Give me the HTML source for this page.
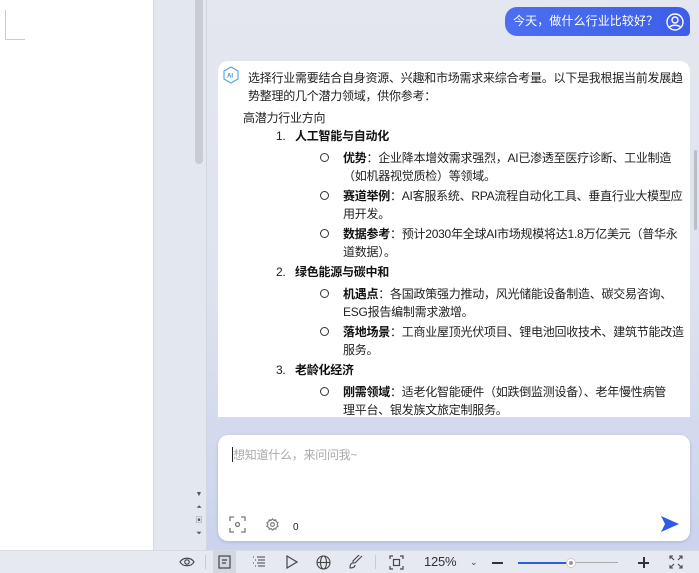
<!DOCTYPE html>
<html><head><meta charset="utf-8"><style>
*{margin:0;padding:0;box-sizing:border-box}
body{width:699px;height:573px;overflow:hidden;position:relative;font-family:"Liberation Sans","Noto Sans CJK SC",sans-serif;font-size:12px;color:#222;background:#fff}
.a{position:absolute;white-space:nowrap;line-height:18px;letter-spacing:-0.25px}
b{font-weight:bold;color:#111}
.c{position:absolute;width:9px;height:9px;border:1.3px solid #333;border-radius:50%}
</style></head><body>
<div style="position:absolute;left:0;top:0;width:153px;height:550px;background:#fff"></div>
<div style="position:absolute;left:5px;top:10px;width:1px;height:29px;background:#ccc"></div>
<div style="position:absolute;left:5px;top:39px;width:20px;height:1px;background:#ccc"></div>
<div style="position:absolute;left:153px;top:0;width:54px;height:550px;background:#e3e7ee;border-left:1px solid #d5d9e0;border-right:1px solid #d3d6dc"></div>
<div style="position:absolute;left:195px;top:0;width:8px;height:164px;background:#c9ccd0;border-radius:0 0 4px 4px"></div>
<div style="position:absolute;left:207px;top:0;width:492px;height:550px;background:linear-gradient(#e4e7ef 0%,#dfe3ef 50%,#cbd3ed 100%)"></div>
<div style="position:absolute;left:694px;top:150px;width:3px;height:80px;background:#b9bdc5;border-radius:2px"></div>
<div style="position:absolute;left:505px;top:7px;width:185px;height:29px;background:linear-gradient(90deg,#4c6ef0,#3d5fe8);border-radius:12px 12px 4px 12px"></div>
<div class="a" style="left:513px;top:12px;color:#fff;font-size:12px;letter-spacing:0.1px">今天，做什么行业比较好？</div>
<svg style="position:absolute;left:666px;top:13px" width="18" height="18" viewBox="0 0 18 18" fill="none" stroke="#fff" stroke-width="1.4"><circle cx="9" cy="9" r="8"/><circle cx="9" cy="7" r="3"/><path d="M3.5 14.5c1.5-3 9.5-3 11 0"/></svg>
<div style="position:absolute;left:218px;top:61px;width:472px;height:356px;background:#fff;border-radius:10px 10px 0 0"></div>
<svg style="position:absolute;left:223px;top:66px" width="16" height="18" viewBox="0 0 16 18" fill="none" stroke="#4aa3e8" stroke-width="1.1"><path d="M8 1L15 5v8L8 17 1 13V5z"/><text x="4" y="11.5" font-size="6" fill="#3a8fdc" stroke="none" font-family="Liberation Sans" font-weight="bold">AI</text></svg>
<div class="a" style="left:248px;top:69px">选择行业需要结合自身资源、兴趣和市场需求来综合考量。以下是我根据当前发展趋</div>
<div class="a" style="left:248px;top:87px">势整理的几个潜力领域，供你参考：</div>
<div class="a" style="left:243px;top:109px">高潜力行业方向</div>
<div class="a" style="left:276px;top:127px">1.</div><div class="a" style="left:295px;top:127px"><b>人工智能与自动化</b></div>
<div class="c" style="left:320px;top:153px"></div>
<div class="a" style="left:343px;top:149px"><b>优势</b>：企业降本增效需求强烈，AI已渗透至医疗诊断、工业制造</div>
<div class="a" style="left:343px;top:167px">（如机器视觉质检）等领域。</div>
<div class="c" style="left:320px;top:191px"></div>
<div class="a" style="left:343px;top:187px"><b>赛道举例</b>：AI客服系统、RPA流程自动化工具、垂直行业大模型应</div>
<div class="a" style="left:343px;top:205px">用开发。</div>
<div class="c" style="left:320px;top:229px"></div>
<div class="a" style="left:343px;top:225px"><b>数据参考</b>：预计2030年全球AI市场规模将达1.8万亿美元（普华永</div>
<div class="a" style="left:343px;top:243px">道数据）。</div>
<div class="a" style="left:276px;top:263px">2.</div><div class="a" style="left:295px;top:263px"><b>绿色能源与碳中和</b></div>
<div class="c" style="left:320px;top:289px"></div>
<div class="a" style="left:343px;top:285px"><b>机遇点</b>：各国政策强力推动，风光储能设备制造、碳交易咨询、</div>
<div class="a" style="left:343px;top:303px">ESG报告编制需求激增。</div>
<div class="c" style="left:320px;top:327px"></div>
<div class="a" style="left:343px;top:323px"><b>落地场景</b>：工商业屋顶光伏项目、锂电池回收技术、建筑节能改造</div>
<div class="a" style="left:343px;top:341px">服务。</div>
<div class="a" style="left:276px;top:361px">3.</div><div class="a" style="left:295px;top:361px"><b>老龄化经济</b></div>
<div class="c" style="left:320px;top:387px"></div>
<div class="a" style="left:343px;top:383px"><b>刚需领域</b>：适老化智能硬件（如跌倒监测设备）、老年慢性病管</div>
<div class="a" style="left:343px;top:401px">理平台、银发族文旅定制服务。</div>
<div style="position:absolute;left:218px;top:435px;width:472px;height:106px;background:#fff;border-radius:10px;box-shadow:0 1px 3px rgba(0,0,0,.15)"></div>
<div style="position:absolute;left:232px;top:447px;width:1px;height:15px;background:#222"></div>
<div class="a" style="left:233px;top:446px;color:#aaa">想知道什么，来问问我~</div>
<svg style="position:absolute;left:229px;top:516px" width="17" height="17" viewBox="0 0 17 17" fill="none" stroke="#777" stroke-width="1.3"><path d="M1 5V1h4M12 1h4v4M16 12v4h-4M5 16H1v-4"/><circle cx="8.5" cy="8.5" r="2"/></svg>
<svg style="position:absolute;left:266px;top:518px" width="13" height="13" viewBox="0 0 14 14" fill="none" stroke="#777" stroke-width="1.2"><path d="M7 1l1.5 1.5 2-.5.5 2 2 1-1 2 1 2-2 1-.5 2-2-.5L7 13l-1.5-1.5-2 .5-.5-2-2-1 1-2-1-2 2-1 .5-2 2 .5z"/><circle cx="7" cy="7" r="2"/></svg>
<div class="a" style="left:293px;top:519px;font-size:10px">0</div>
<svg style="position:absolute;left:661px;top:516px" width="18" height="16" viewBox="0 0 18 16"><path d="M0 0L18 8 0 16 4 8z" fill="#2f5be6"/></svg>
<div style="position:absolute;left:195px;top:488px;font-size:7px;line-height:13px;color:#555;text-align:center;width:8px">▼<br>⏶<br>▣<br>⏷</div>
<div style="position:absolute;left:0;top:550px;width:699px;height:23px;background:#e6eaf0;border-top:1px solid #d8dce2"></div>
<svg style="position:absolute;left:179px;top:556px" width="16" height="12" viewBox="0 0 16 12" fill="none" stroke="#444" stroke-width="1.2"><path d="M1 6C4 1 12 1 15 6 12 11 4 11 1 6z"/><circle cx="8" cy="6" r="2.2"/></svg>
<div style="position:absolute;left:205px;top:555px;width:1px;height:14px;background:#c8ccd2"></div>
<div style="position:absolute;left:213px;top:551px;width:23px;height:22px;background:#d3d7de"></div>
<svg style="position:absolute;left:218px;top:555px" width="13" height="14" viewBox="0 0 13 14" fill="none" stroke="#444" stroke-width="1.2"><rect x="1" y="1" width="11" height="12"/><path d="M4 5h5M4 8h4"/></svg>
<svg style="position:absolute;left:252px;top:556px" width="14" height="12" viewBox="0 0 14 12" fill="none" stroke="#444" stroke-width="1.1"><path d="M1 1h1M5 1h8M3 4h1M6 4h7M1 7h1M5 7h8M3 10h1M6 10h7"/></svg>
<svg style="position:absolute;left:286px;top:555px" width="12" height="14" viewBox="0 0 12 14" fill="none" stroke="#444" stroke-width="1.2"><path d="M1 1l10 6-10 6z"/></svg>
<svg style="position:absolute;left:316px;top:555px" width="15" height="15" viewBox="0 0 15 15" fill="none" stroke="#444" stroke-width="1.1"><circle cx="7.5" cy="7.5" r="6.5"/><ellipse cx="7.5" cy="7.5" rx="3" ry="6.5"/><path d="M1 7.5h13"/></svg>
<svg style="position:absolute;left:349px;top:555px" width="14" height="14" viewBox="0 0 14 14" fill="none" stroke="#444" stroke-width="1.1"><path d="M13 1L6 8l-2 0 0-2 7-7M4 8c-2 0-3 2-3 5 3 0 5-1 5-3"/></svg>
<div style="position:absolute;left:375px;top:555px;width:1px;height:14px;background:#c8ccd2"></div>
<svg style="position:absolute;left:389px;top:555px" width="15" height="15" viewBox="0 0 15 15" fill="none" stroke="#444" stroke-width="1.2"><path d="M1 4V1h3M11 1h3v3M14 11v3h-3M4 14H1v-3"/><rect x="4.5" y="4.5" width="6" height="6"/></svg>
<div class="a" style="left:424px;top:553px;font-size:13px;color:#333">125%</div>
<div class="a" style="left:470px;top:553px;font-size:9px;color:#444">⌄</div>
<div style="position:absolute;left:492px;top:562px;width:11px;height:2px;background:#333"></div>
<div style="position:absolute;left:518px;top:562px;width:52px;height:2px;background:#2b5fd9"></div>
<div style="position:absolute;left:570px;top:562px;width:48px;height:1px;background:#aaa"></div>
<div style="position:absolute;left:566px;top:558px;width:10px;height:10px;border-radius:50%;background:#fff;border:1px solid #ccc"><div style="margin:2px;width:4px;height:4px;border-radius:50%;background:#999"></div></div>
<div style="position:absolute;left:638px;top:562px;width:11px;height:2px;background:#333"></div>
<div style="position:absolute;left:642.5px;top:557px;width:2px;height:11px;background:#333"></div>
<svg style="position:absolute;left:669px;top:555px" width="14" height="14" viewBox="0 0 14 14" fill="none" stroke="#444" stroke-width="1.1"><path d="M1 4V1h3M1 1l4 4M10 1h3v3M13 1l-4 4M13 10v3h-3M13 13l-4-4M4 13H1v-3M1 13l4-4"/></svg>
</body></html>
